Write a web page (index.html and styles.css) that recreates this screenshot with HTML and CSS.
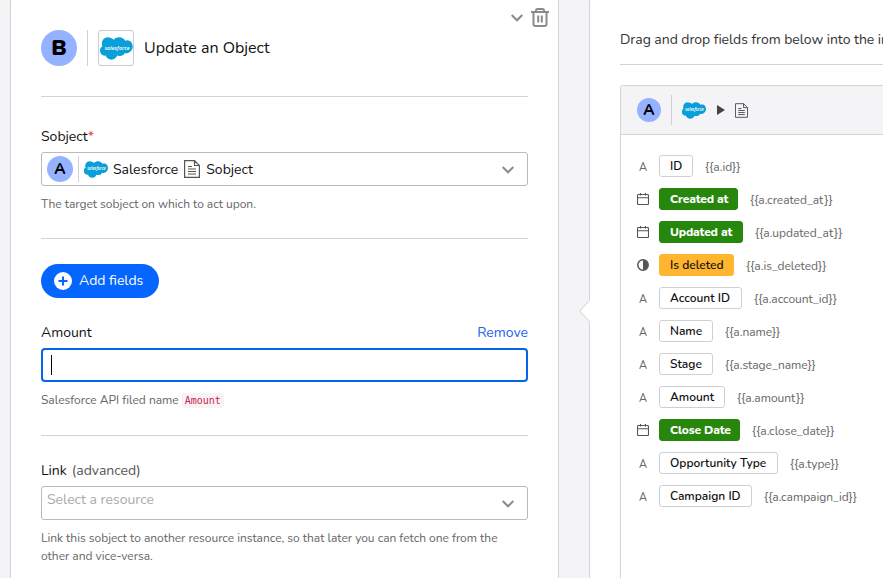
FILE: index.html
```html
<!DOCTYPE html>
<html lang="en">
<head>
<meta charset="utf-8">
<title>Update an Object</title>
<link rel="stylesheet" href="styles.css">
</head>
<body>
<svg class="defs" width="0" height="0" aria-hidden="true">
  <symbol id="cloud" viewBox="0 0 96 68">
    <path fill="#0b9fd9" d="M40 8C44 3 50 1 56 1c8 0 14 4 18 10 3-1 6-2 9-1 8 1 13 9 13 18 0 11-9 20-20 20h-4c-3 6-9 9-16 8-3 0-5-1-6-1-3 7-9 12-17 12-8 0-14-5-17-12-9 1-17-6-17-15 0-6 3-10 7-13C2 14 9 2 21 1c8 0 15 3 19 7z"/>
    <text x="50" y="37" fill="#fff" font-family="Open Sans, sans-serif" font-weight="600" font-style="italic" font-size="18" text-anchor="middle" textLength="74" lengthAdjust="spacingAndGlyphs">salesforce</text>
  </symbol>
  <symbol id="doc" viewBox="0 0 16 18">
    <path fill="none" stroke="#555" stroke-width="1.2" d="M.6.6h9.900l4.900 4.900v11.900H.6zM10.500.6v4.900h4.900M4 6.500h4M4 9h8M4 11.500h8M4 14h8"/>
  </symbol>
  <symbol id="chev" viewBox="0 0 12 8">
    <path fill="none" stroke="#8b8b8b" stroke-width="2" d="M.7 1L6 6.300 11.300 1"/>
  </symbol>
  <symbol id="cal" viewBox="0 0 12 12">
    <path fill="none" stroke="#555" stroke-width="1.100" d="M1.500 1.500h9q1 0 1 1v8q0 1-1 1h-9q-1 0-1-1v-8q0-1 1-1zM.5 4.700h11M3.500 0v2.500M8.500 0v2.500"/>
  </symbol>
  <symbol id="half" viewBox="0 0 12 12">
    <circle cx="6" cy="6" r="5.200" fill="none" stroke="#555" stroke-width="1.500"/><path fill="#555" d="M6 1a5 5 0 0 1 0 10z"/>
  </symbol>
</svg>
<div class="page">
  <main class="card step">
    <header class="step-head">
      <span class="badge big">B</span><span class="bar"></span>
      <span class="logo-box"><svg class="cloud-l"><use href="#cloud"/></svg></span>
      <h1>Update an Object</h1>
      <div class="tools">
        <svg class="chev"><use href="#chev"/></svg>
        <svg class="trash" viewBox="0 0 18 19"><path fill="none" stroke="#8b8b8b" stroke-width="2" d="M0 4h18M5 4V2.500Q5 1 6.500 1h5Q13 1 13 2.500V4M2.500 4v12q0 2 2 2h9q2 0 2-2V4M7.200 7.500v7M10.800 7.500v7"/></svg>
      </div>
    </header>
    <section class="sobject">
      <div class="label">Sobject<span class="req">*</span></div>
      <div class="control">
        <span class="badge mid">A</span><span class="bar"></span>
        <svg class="cloud-m"><use href="#cloud"/></svg><span class="value">Salesforce</span>
        <svg class="doc-m"><use href="#doc"/></svg><span class="value">Sobject</span>
        <svg class="chev end"><use href="#chev"/></svg>
      </div>
      <p class="help">The target sobject on which to act upon.</p>
    </section>
    <section class="fields">
      <button class="add"><svg viewBox="0 0 18 18"><circle cx="9" cy="9" r="9" fill="#fff"/><path stroke="#0565ff" stroke-width="2" d="M9 4.500v9M4.500 9h9"/></svg><span>Add fields</span></button>
      <div class="label amount"><span>Amount</span><a>Remove</a></div>
      <div class="control focus"><span class="caret"></span></div>
      <p class="help">Salesforce API filed name <code>Amount</code></p>
    </section>
    <section class="link">
      <div class="label">Link<span class="adv">(advanced)</span></div>
      <div class="control"><span class="placeholder">Select a resource</span><svg class="chev end"><use href="#chev"/></svg></div>
      <p class="help">Link this sobject to another resource instance, so that later you can fetch one from the other and vice-versa.</p>
    </section>
  </main>
  <aside class="card side">
    <svg class="pointer" viewBox="0 0 11 22"><path fill="#fff" d="M11 0L.7 11 11 22z"/><path fill="none" stroke="#d0d0d2" d="M10.500 .5L.7 11l9.800 10.500"/></svg>
    <p class="intro">Drag and drop fields from below into the inputs</p>
    <div class="panel">
      <div class="panel-head">
        <span class="badge small">A</span><span class="bar"></span>
        <svg class="cloud-s"><use href="#cloud"/></svg>
        <svg class="play" viewBox="0 0 8 10"><path fill="#444" d="M0 0l8 5-8 5z"/></svg>
        <svg class="doc-s"><use href="#doc"/></svg>
      </div>
      <ul>
        <li><i>A</i><b class="k1">ID</b><span>{{a.id}}</span></li>
        <li><svg><use href="#cal"/></svg><b class="date k2">Created at</b><span>{{a.created_at}}</span></li>
        <li><svg><use href="#cal"/></svg><b class="date k3">Updated at</b><span>{{a.updated_at}}</span></li>
        <li><svg><use href="#half"/></svg><b class="bool k4">Is deleted</b><span>{{a.is_deleted}}</span></li>
        <li><i>A</i><b class="k5">Account ID</b><span>{{a.account_id}}</span></li>
        <li><i>A</i><b class="k6">Name</b><span>{{a.name}}</span></li>
        <li><i>A</i><b class="k7">Stage</b><span>{{a.stage_name}}</span></li>
        <li><i>A</i><b class="k8">Amount</b><span>{{a.amount}}</span></li>
        <li><svg><use href="#cal"/></svg><b class="date k9">Close Date</b><span>{{a.close_date}}</span></li>
        <li><i>A</i><b class="k10">Opportunity Type</b><span>{{a.type}}</span></li>
        <li><i>A</i><b class="k11">Campaign ID</b><span>{{a.campaign_id}}</span></li>
      </ul>
    </div>
  </aside>
</div>
</body>
</html>
```
FILE: styles.css
```css
* { box-sizing: border-box; }
body { margin: 0; height: 578px; overflow: hidden; background: #f4f4f7; color: #111; font: 14px/20px Nunito, "Open Sans", sans-serif; }
svg { display: block; flex: none; overflow: visible; }
.defs { position: absolute; }
span, b, a { white-space: nowrap; }
.page { display: flex; gap: 30px; margin-top: -4px; padding-left: 10px; width: 883px; height: 582px; overflow: hidden; }
.card { background: #fff; border: 1px solid #d4d4d6; border-bottom: 0; border-radius: 6px 6px 0 0; flex: none; }
.step { width: 549px; padding: 0 30px; }
.side { width: 294px; padding: 0 0 0 30px; position: relative; border-right: 0; border-top-right-radius: 0; }
.badge { display: flex; align-items: center; justify-content: center; flex: none; border-radius: 50%; background: #94b2ff; color: #000; font-weight: 900; }
.big { width: 36px; height: 36px; font-size: 22px; }
.mid { width: 26px; height: 26px; font-size: 15px; font-weight: 800; padding-bottom: 1px; }
.small { width: 24px; height: 24px; font-size: 15px; font-weight: 800; padding-bottom: 1px; }
.bar { width: 1px; background: #d0d0d2; flex: none; }
.step-head { display: flex; align-items: center; height: 100px; padding-top: 2px; border-bottom: 1px solid #d4d4d6; }
.step-head .bar { height: 36px; margin: 0 10px; }
.logo-box { width: 36px; height: 36px; border: 1px solid #ccc; border-radius: 3px; display: flex; align-items: center; justify-content: center; padding-top: 1px; }
.cloud-l { width: 33px; height: 23px; }
h1 { margin: 0 0 0 10px; font-size: 16px; font-weight: 400; white-space: nowrap; }
.tools { display: flex; align-items: center; gap: 8px; margin: -60px -21px 0 auto; }
.chev { width: 12px; height: 8px; }
.trash { width: 18px; height: 19px; }
.sobject { height: 142px; padding-top: 30px; border-bottom: 1px solid #d4d4d6; }
.fields { height: 197px; padding-top: 25px; border-bottom: 1px solid #d4d4d6; }
.link { padding-top: 25px; }
.label { display: flex; height: 20px; margin-bottom: 5px; }
.req { color: #e8432d; }
.control { display: flex; align-items: center; height: 34px; border: 1px solid #bababc; border-radius: 3px; padding: 0 13px 0 5px; }
.control .bar { height: 26px; margin: 0 5px 0 5px; }
.control .value { margin-top: 2px; }
.cloud-m { width: 24px; height: 17px; margin-right: 5px; }
.doc-m { width: 16px; height: 18px; margin: 0 6px; }
.end { margin: 2px 0 0 auto; }
.help { margin: 9px 0 0; font-size: 12px; line-height: 18px; letter-spacing: -.02px; color: #666; }
.add { display: flex; align-items: center; gap: 7px; width: 118px; height: 34px; padding: 0 0 0 13px; border: 0; border-radius: 17px; background: #0565ff; color: #fff; font: inherit; }
.add svg { width: 18px; height: 18px; }
.amount { margin-top: 25px; justify-content: space-between; }
.amount a { color: #2563eb; }
.focus { border: 2px solid #0565e8; border-radius: 4px; padding-left: 8px; }
.caret { width: 1px; height: 20px; background: #000; }
code { padding: 2px 3px; background: #f9f2f4; border-radius: 3px; color: #c7254e; font: 10px/12px "DejaVu Sans Mono", monospace; }
.adv { color: #555; margin-left: 5px; }
.placeholder { color: #aaa; margin-top: -7px; }
.pointer { position: absolute; left: -11px; top: 303px; width: 11px; height: 22px; }
.intro { margin: 0; height: 68px; padding-top: 33px; border-bottom: 1px solid #d4d4d6; white-space: nowrap; overflow: hidden; color: #333; letter-spacing: -.04px; }
.panel { margin-top: 20px; height: 493px; border: 1px solid #d4d4d6; border-width: 1px 0 0 1px; border-radius: 3px 0 0 0; }
.panel-head { display: flex; align-items: center; height: 49px; padding-left: 16px; background: #f4f4f7; border-bottom: 1px solid #d4d4d6; }
.panel-head .bar { height: 30px; margin: 0 10px; }
.cloud-s { width: 24px; height: 17px; margin-right: 11px; }
.play { width: 8px; height: 10px; margin-right: 10px; }
.doc-s { width: 13px; height: 15px; }
ul { list-style: none; margin: 14px 0 0; padding: 0 0 0 16px; }
li { display: flex; align-items: center; height: 33px; }
li svg, li i { width: 12px; height: 12px; margin-right: 10px; }
li i { font-style: normal; font-size: 11px; line-height: 15px; text-align: center; color: #666; }
li b { height: 22px; border: 1px solid #d0d0d2; border-radius: 3px; padding: 0 0 0 10px; font-size: 12px; font-weight: 650; line-height: 20px; flex: none; }
li .date { background: #27870c; border-color: #27870c; color: #fff; font-weight: 800; letter-spacing: -.17px; }
li .bool { background: #ffb52e; border-color: #ffb52e; }
li span { margin: 2px 0 0 12px; font-size: 12px; letter-spacing: -.04px; color: #666; }
.k1 { width: 34px; } .k2 { width: 79px; } .k3 { width: 84px; } .k4 { width: 75px; } .k5 { width: 83px; } .k6 { width: 54px; }
.k7 { width: 54px; } .k8 { width: 66px; } .k9 { width: 81px; } .k10 { width: 119px; } .k11 { width: 93px; }
```
